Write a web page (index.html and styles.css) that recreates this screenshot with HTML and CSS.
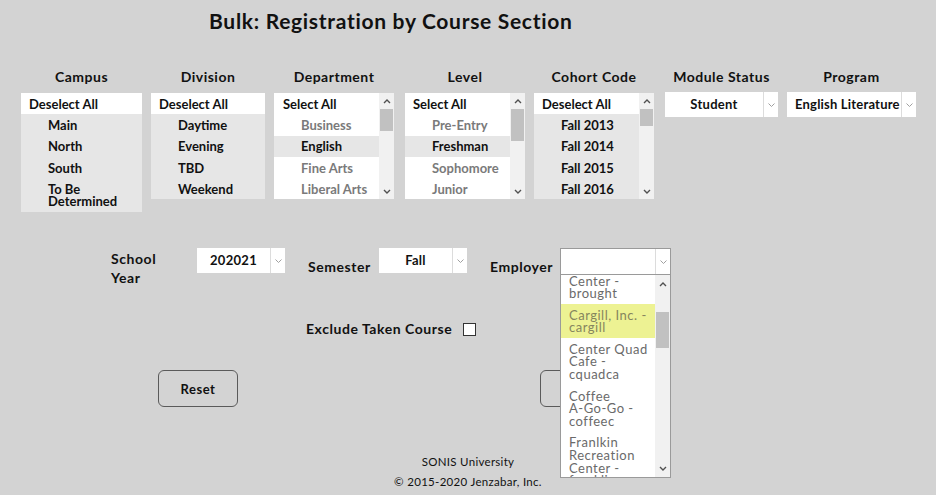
FILE: index.html
```html
<!DOCTYPE html>
<html>
<head>
<meta charset="utf-8">
<link rel="stylesheet" href="styles.css">
</head>
<body>
<div class="page">
  <h1 class="title">Bulk: Registration by Course Section</h1>

  <div class="filters">
    <div class="col col-campus">
      <div class="col-head">Campus</div>
      <div class="listbox listbox-auto">
        <div class="opts">
          <div class="opt opt-all">Deselect All</div>
          <div class="opt sel">Main</div>
          <div class="opt sel">North</div>
          <div class="opt sel">South</div>
          <div class="opt sel">To Be<br>Determined</div>
        </div>
      </div>
    </div>

    <div class="col col-division">
      <div class="col-head">Division</div>
      <div class="listbox">
        <div class="opts">
          <div class="opt opt-all">Deselect All</div>
          <div class="opt sel">Daytime</div>
          <div class="opt sel">Evening</div>
          <div class="opt sel">TBD</div>
          <div class="opt sel">Weekend</div>
        </div>
      </div>
    </div>

    <div class="col col-dept">
      <div class="col-head">Department</div>
      <div class="listbox">
        <div class="opts">
          <div class="opt opt-all opt-all-wide">Select All</div>
          <div class="opt dim">Business</div>
          <div class="opt sel">English</div>
          <div class="opt dim">Fine Arts</div>
          <div class="opt dim">Liberal Arts</div>
        </div>
        <div class="sbar">
          <div class="sbar-btn"><svg width="8" height="5" viewBox="0 0 8 5"><polyline points="1,4 4,1 7,4" fill="none" stroke="#505050" stroke-width="1.4"/></svg></div>
          <div class="sbar-track"><div class="sbar-thumb thumb-dept"></div></div>
          <div class="sbar-btn"><svg width="8" height="5" viewBox="0 0 8 5"><polyline points="1,1 4,4 7,1" fill="none" stroke="#505050" stroke-width="1.4"/></svg></div>
        </div>
      </div>
    </div>

    <div class="col col-level">
      <div class="col-head">Level</div>
      <div class="listbox">
        <div class="opts">
          <div class="opt opt-all">Select All</div>
          <div class="opt dim">Pre-Entry</div>
          <div class="opt sel">Freshman</div>
          <div class="opt dim">Sophomore</div>
          <div class="opt dim">Junior</div>
        </div>
        <div class="sbar">
          <div class="sbar-btn"><svg width="8" height="5" viewBox="0 0 8 5"><polyline points="1,4 4,1 7,4" fill="none" stroke="#505050" stroke-width="1.4"/></svg></div>
          <div class="sbar-track"><div class="sbar-thumb thumb-level"></div></div>
          <div class="sbar-btn"><svg width="8" height="5" viewBox="0 0 8 5"><polyline points="1,1 4,4 7,1" fill="none" stroke="#505050" stroke-width="1.4"/></svg></div>
        </div>
      </div>
    </div>

    <div class="col col-cohort">
      <div class="col-head">Cohort Code</div>
      <div class="listbox">
        <div class="opts">
          <div class="opt opt-all">Deselect All</div>
          <div class="opt sel">Fall 2013</div>
          <div class="opt sel">Fall 2014</div>
          <div class="opt sel">Fall 2015</div>
          <div class="opt sel">Fall 2016</div>
        </div>
        <div class="sbar">
          <div class="sbar-btn"><svg width="8" height="5" viewBox="0 0 8 5"><polyline points="1,4 4,1 7,4" fill="none" stroke="#505050" stroke-width="1.4"/></svg></div>
          <div class="sbar-track"><div class="sbar-thumb thumb-cohort"></div></div>
          <div class="sbar-btn"><svg width="8" height="5" viewBox="0 0 8 5"><polyline points="1,1 4,4 7,1" fill="none" stroke="#505050" stroke-width="1.4"/></svg></div>
        </div>
      </div>
    </div>

    <div class="col col-module">
      <div class="col-head col-head-sel">Module Status</div>
      <div class="select">
        <div class="select-val center">Student</div>
        <div class="select-arrow"><svg width="7" height="4" viewBox="0 0 7 4"><polyline points="0.5,0.5 3.5,3.5 6.5,0.5" fill="none" stroke="#a0a0a0" stroke-width="1"/></svg></div>
      </div>
    </div>

    <div class="col col-program">
      <div class="col-head col-head-sel">Program</div>
      <div class="select">
        <div class="select-val left">English Literature</div>
        <div class="select-arrow"><svg width="7" height="4" viewBox="0 0 7 4"><polyline points="0.5,0.5 3.5,3.5 6.5,0.5" fill="none" stroke="#a0a0a0" stroke-width="1"/></svg></div>
      </div>
    </div>
  </div>

  <div class="row2">
    <div class="lbl lbl-year">School<br>Year</div>
    <div class="select select-sm">
      <div class="select-val center">202021</div>
      <div class="select-arrow"><svg width="7" height="4" viewBox="0 0 7 4"><polyline points="0.5,0.5 3.5,3.5 6.5,0.5" fill="none" stroke="#a0a0a0" stroke-width="1"/></svg></div>
    </div>
    <div class="lbl lbl-low lbl-sem">Semester</div>
    <div class="select select-sm">
      <div class="select-val center">Fall</div>
      <div class="select-arrow"><svg width="7" height="4" viewBox="0 0 7 4"><polyline points="0.5,0.5 3.5,3.5 6.5,0.5" fill="none" stroke="#a0a0a0" stroke-width="1"/></svg></div>
    </div>
    <div class="lbl lbl-low lbl-emp">Employer</div>
    <div class="emp">
      <div class="select select-emp">
        <div class="select-val"></div>
        <div class="select-arrow"><svg width="7" height="4" viewBox="0 0 7 4"><polyline points="0.5,0.5 3.5,3.5 6.5,0.5" fill="none" stroke="#a0a0a0" stroke-width="1"/></svg></div>
      </div>
      <div class="dropdown">
        <div class="dd-opts">
          <div class="dd-opt dd-first">Center -<br>brought</div>
          <div class="dd-opt dd-hi">Cargill, Inc. -<br>cargill</div>
          <div class="dd-opt">Center Quad<br>Cafe -<br>cquadca</div>
          <div class="dd-opt">Coffee<br>A-Go-Go -<br>coffeec</div>
          <div class="dd-opt">Franlkin<br>Recreation<br>Center -<br>franklin</div>
        </div>
        <div class="sbar sbar-dd">
          <div class="sbar-btn"><svg width="8" height="5" viewBox="0 0 8 5"><polyline points="1,4 4,1 7,4" fill="none" stroke="#505050" stroke-width="1.4"/></svg></div>
          <div class="sbar-track"><div class="sbar-thumb thumb-dd"></div></div>
          <div class="sbar-btn"><svg width="8" height="5" viewBox="0 0 8 5"><polyline points="1,1 4,4 7,1" fill="none" stroke="#505050" stroke-width="1.4"/></svg></div>
        </div>
      </div>
    </div>
  </div>

  <div class="row3">
    <div class="lbl">Exclude Taken Course</div>
    <div class="checkbox"></div>
  </div>

  <div class="buttons">
    <button class="btn">Reset</button>
    <button class="btn btn-submit">Submit</button>
  </div>

  <footer class="footer">
    <div>SONIS University</div>
    <div>© 2015-2020 Jenzabar, Inc.</div>
  </footer>
</div>
</body>
</html>
```

FILE: styles.css
```css
html, body {
  margin: 0;
  padding: 0;
}
body {
  background: #d3d3d3;
  font-family: "Lato", "Liberation Sans", sans-serif;
  color: #111;
  width: 936px;
  height: 495px;
  overflow: hidden;
}
.page {
  height: 495px;
}
.title {
  margin: 0;
  padding: 9px 0 0 209px;
  font-size: 21px;
  line-height: 24px;
  font-weight: 700;
  letter-spacing: 0.7px;
}
.filters {
  display: flex;
  align-items: flex-start;
  padding-left: 21px;
  margin-top: 35px;
}
.col {
  flex: none;
}
.col-campus { width: 121px; }
.col-division { width: 114px; margin-left: 9px; }
.col-dept { width: 120px; margin-left: 9px; }
.col-level { width: 120px; margin-left: 11px; }
.col-cohort { width: 120px; margin-left: 9px; }
.col-module { width: 113px; margin-left: 11px; }
.col-program { width: 129px; margin-left: 9px; }
.col-head {
  text-align: center;
  font-size: 14px;
  font-weight: 700;
  line-height: 18px;
  margin-bottom: 7px;
  letter-spacing: 0.5px;
  white-space: nowrap;
}
.col-head-sel {
  margin-bottom: 6px;
}
.listbox {
  display: flex;
  background: #fff;
  height: 106px;
  overflow: hidden;
}
.listbox-auto {
  height: auto;
  background: #e6e6e6;
}
.opts {
  flex: 1;
  min-width: 0;
}
.opt {
  font-size: 13px;
  font-weight: 700;
  line-height: 12px;
  padding: 4.75px 4px 4.75px 27px;
  white-space: nowrap;
}
.opt-all {
  background: #fff;
  padding-left: 8px;
  padding-top: 4.5px;
  padding-bottom: 4.5px;
}
.opt-all-wide {
  padding-left: 9px;
}
.opt.sel {
  background: #e6e6e6;
  color: #111;
}
.opt.dim {
  color: #7a7a7a;
}
.sbar {
  width: 15px;
  flex: none;
  background: #f1f1f1;
  display: flex;
  flex-direction: column;
}
.sbar-btn {
  height: 16px;
  display: flex;
  align-items: center;
  justify-content: center;
  flex: none;
}
.sbar-track {
  flex: 1;
}
.sbar-thumb {
  background: #c1c1c1;
  margin: 0 1px;
}
.thumb-dept { height: 22px; }
.thumb-level { height: 32px; }
.thumb-cohort { height: 17px; }

.select {
  display: flex;
  background: #fff;
  height: 25px;
}
.select-val {
  flex: 1;
  font-size: 13px;
  font-weight: 700;
  line-height: 25px;
  letter-spacing: 0.3px;
  white-space: nowrap;
  overflow: hidden;
}
.select-val.center {
  text-align: center;
}
.select-val.left {
  padding-left: 8px;
  letter-spacing: 0.2px;
}
.select-arrow {
  width: 14px;
  flex: none;
  border-left: 1px solid #dcdcdc;
  display: flex;
  align-items: center;
  justify-content: center;
}

.row2 {
  display: flex;
  align-items: flex-start;
  padding-left: 111px;
  margin-top: 36px;
}
.lbl {
  font-size: 14px;
  font-weight: 700;
  line-height: 19px;
  letter-spacing: 0.55px;
  white-space: nowrap;
}
.lbl-year {
  width: 86px;
  padding-top: 1px;
}
.lbl-low {
  margin-top: 9px;
}
.lbl-sem {
  width: 71px;
}
.lbl-emp {
  width: 70px;
}
.select-sm {
  width: 88px;
  margin-right: 23px;
}
.emp {
  position: relative;
  width: 111px;
}
.select-emp {
  box-sizing: border-box;
  height: 26px;
  border: 1px solid #9a9a9a;
  border-bottom: none;
}
.dropdown {
  position: absolute;
  left: 0;
  top: 26px;
  width: 111px;
  height: 204px;
  box-sizing: border-box;
  border: 1px solid #9a9a9a;
  background: #fff;
  display: flex;
  overflow: hidden;
  z-index: 5;
}
.dd-opts {
  flex: 1;
  min-width: 0;
  overflow: hidden;
}
.dd-opt {
  font-size: 13px;
  font-weight: 400;
  color: #6a6a6a;
  line-height: 12.6px;
  letter-spacing: 0.5px;
  padding: 4.5px 2px 4.5px 8px;
  white-space: nowrap;
}
.dd-first {
  margin-top: -5px;
}
.dd-hi {
  background: #edf293;
  color: #85855e;
}
.sbar-dd .sbar-btn {
  height: 18px;
}
.thumb-dd {
  margin-top: 19px;
  height: 36px;
}

.row3 {
  display: flex;
  align-items: center;
  padding-left: 306px;
  margin-top: 32px;
}
.checkbox {
  width: 11px;
  height: 11px;
  border: 1px solid #333;
  background: #fff;
  margin-left: 11px;
  margin-top: 1px;
}

.buttons {
  display: flex;
  padding-left: 158px;
  margin-top: 32px;
  gap: 302px;
}
.btn {
  width: 80px;
  height: 37px;
  box-sizing: border-box;
  border: 1px solid #5a5a5a;
  border-radius: 6px;
  background: transparent;
  font-family: "Lato", "Liberation Sans", sans-serif;
  font-size: 13px;
  font-weight: 700;
  letter-spacing: 0.5px;
  color: #111;
  padding: 0;
}
.btn-submit {
  width: 110px;
}

.footer {
  margin-top: 45px;
  text-align: center;
  font-size: 11.5px;
  line-height: 19.5px;
  font-weight: 400;
  letter-spacing: 0.3px;
  color: #111;
}
```
